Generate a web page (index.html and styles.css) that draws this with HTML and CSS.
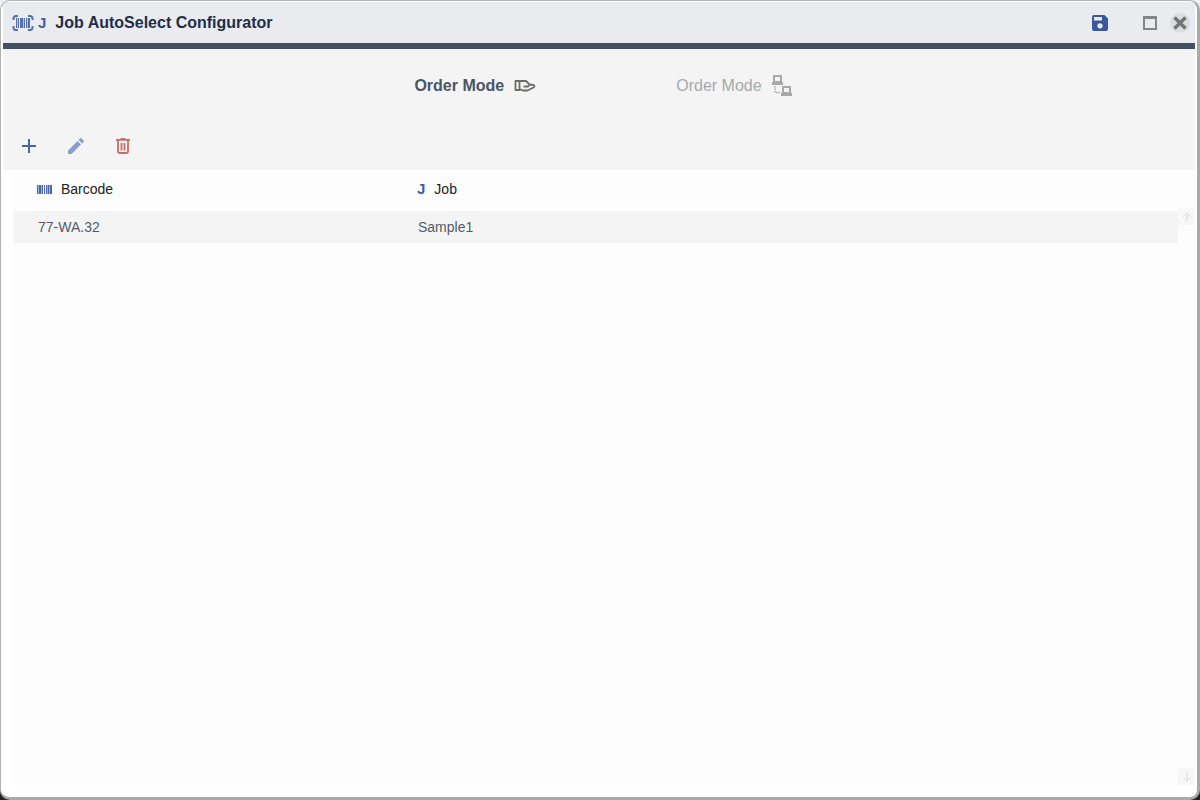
FILE: index.html
```html
<!DOCTYPE html>
<html lang="en">
<head>
    <meta charset="UTF-8">
    <meta name="viewport" content="width=device-width, initial-scale=1.0">
    <title>Job AutoSelect Configurator</title>
    <link rel="stylesheet" href="styles.css">
</head>
<body>
    <div class="window">
        <header class="titlebar">
            <svg width="22" height="18" viewBox="0 0 22 18" aria-hidden="true">
                <path d="M6 2H4a2.5 2.5 0 0 0-2.500 2.500V6M16 2h2a2.500 2.500 0 0 1 2.500 2.500V6M6 16H4a2.500 2.500 0 0 1-2.500-2.500V12M16 16h2a2.500 2.500 0 0 0 2.500-2.500V12" fill="none" stroke="#5271b2" stroke-width="2"/>
                <path d="M4 4h1v10H4zM6 4h1v10H6zM8 4h3v10H8zM12 4h1v10h-1zM14 4h1v10h-1zM16 4h2v10h-2z" fill="#5871ac"/>
                <path d="M5 4h1v10H5zM11 4h1v10h-1zM15 4h1v10h-1z" fill="#b4c0da"/>
            </svg>
            <span class="letter">J</span>
            <h1>Job AutoSelect Configurator</h1>
            <div class="window-buttons">
                <button class="save" type="button" aria-label="Save">
                    <svg width="16" height="16" viewBox="0 0 16 16"><path fill-rule="evenodd" d="M2 0h10.5L16 3.5V14a2 2 0 0 1-2 2H2a2 2 0 0 1-2-2V2a2 2 0 0 1 2-2zM2 2v3.5h8V2zM8 8.2a2.6 2.6 0 1 0 0 5.2 2.6 2.6 0 0 0 0-5.2z" fill="#3a569d"/></svg>
                </button>
                <button type="button" aria-label="Maximize">
                    <svg width="14" height="14" viewBox="0 0 14 14"><path fill-rule="evenodd" d="M0 0h14v14H0zM2 3v9h10V3z" fill="#858585"/></svg>
                </button>
                <button class="close" type="button" aria-label="Close">
                    <svg width="14" height="14" viewBox="0 0 14 14"><path d="M1.5 1.5l11 11M12.5 1.5l-11 11" stroke="#747474" stroke-width="3.5"/></svg>
                </button>
            </div>
        </header>

        <div class="controls">
            <div class="modes">
                <button class="mode active" type="button" aria-pressed="true">
                    Order Mode
                    <svg width="22" height="20" viewBox="0 0 22 20" aria-hidden="true">
                        <path d="M1.5 5h4v9h-4zM5.500 5H12l3.500 3.500 4 .5q1.500.8.500 2.200L13.500 14.500H9L5.500 13M15.500 8.500L14 10.500H9.500" fill="none" stroke="#6c6c69" stroke-width="1.8" stroke-linejoin="round"/>
                    </svg>
                </button>
                <button class="mode" type="button" aria-pressed="false">
                    Order Mode
                    <svg width="20" height="22" viewBox="0 0 20 22" aria-hidden="true">
                        <path d="M2 1h7v6H2zM11 12h7v6h-7z" fill="none" stroke="#a8a8a8" stroke-width="2" stroke-linejoin="round"/>
                        <path d="M0 7h11v3H0zM9 18h11v3H9z" fill="#a8a8a8"/>
                        <path d="M3 11v6.500h6" fill="none" stroke="#a8a8a8" stroke-width="1.5" stroke-dasharray="1.5 1"/>
                    </svg>
                </button>
            </div>
            <div class="toolbar">
                <button type="button" aria-label="Add">
                    <svg width="16" height="16" viewBox="0 0 16 16"><path d="M8 1v14M1 8h14" stroke="#4665a8" stroke-width="2"/></svg>
                </button>
                <button type="button" aria-label="Edit">
                    <svg width="16" height="16" viewBox="0 0 16 16"><path d="M0 12.5L9.5 3 13 6.5 3.5 16H0zM10.5 2L12 .5q.8-.8 1.6 0L15.5 2.4q.8.8 0 1.6L14 5.5z" fill="#8c9fca"/></svg>
                </button>
                <button type="button" aria-label="Delete">
                    <svg width="14" height="16" viewBox="0 0 14 16"><path d="M0 1.800h14M4.500 1h5M2 2v11.200q0 1.800 1.800 1.800h6.400q1.800 0 1.800-1.800V2M5.500 5v7.500M8.500 5v7.500" fill="none" stroke="#c76c6c" stroke-width="1.8"/></svg>
                </button>
            </div>
        </div>

        <main class="list">
            <table>
                <thead>
                    <tr>
                        <th class="barcode" scope="col">
                            <div class="heading">
                                <svg width="15" height="9" viewBox="0 0 15 9" aria-hidden="true"><path d="M0 0h1v9H0zM2 0h2v9H2zM5 0h1v9H5zM7 0h1v9H7zM9 0h1v9H9zM11 0h1v9h-1zM13 0h2v9h-2z" fill="#4c68aa"/><path d="M1 0h1v9H1zM4 0h1v9H4zM10 0h1v9h-1zM12 0h1v9h-1z" fill="#a3b3d6"/></svg>
                                Barcode
                            </div>
                        </th>
                        <th scope="col">
                            <div class="heading">
                                <span class="letter">J</span>
                                Job
                            </div>
                        </th>
                    </tr>
                </thead>
                <tbody>
                    <tr>
                        <td>77-WA.32</td>
                        <td>Sample1</td>
                    </tr>
                </tbody>
            </table>
            <div class="scrollbar">
                <button type="button" aria-label="Scroll up">
                    <svg width="10" height="10" viewBox="0 0 10 10"><path d="M5 9.5v-8M1 5l4-4 4 4" fill="none" stroke="#dcdcdc"/></svg>
                </button>
                <button type="button" aria-label="Scroll down">
                    <svg width="10" height="10" viewBox="0 0 10 10"><path d="M5 .5v8M1 5l4 4 4-4" fill="none" stroke="#dcdcdc"/></svg>
                </button>
            </div>
        </main>
    </div>
</body>
</html>
```
FILE: styles.css
```css
* {
    box-sizing: border-box;
}
body {
    font-family: "Liberation Sans", Arial, sans-serif;
    margin: 0;
    background: linear-gradient(#f0f0f0 50%, #222 50%);
}
button {
    display: flex;
    align-items: center;
    justify-content: center;
    padding: 0;
    border: none;
    background: none;
    font-family: inherit;
    cursor: pointer;
}
svg {
    display: block;
    flex: none;
}
.window {
    display: flex;
    flex-direction: column;
    min-height: 100vh;
    overflow: hidden;
    padding: 1px 2px 0 2px;
    background-color: #fff;
    border: 1px solid #b2b2b2;
    border-right: 3px solid #a9a9a9;
    border-bottom: 3px solid #a9a9a9;
    border-radius: 10px;
}
.titlebar {
    display: flex;
    align-items: center;
    height: 47px;
    padding: 0 5px 0 9px;
    background-color: #eaebef;
    border-bottom: 6px solid #45505f;
}
.letter {
    font-size: 15px;
    font-weight: bold;
    line-height: 20px;
    color: #3f5fa8;
}
.titlebar .letter {
    margin: 0 9px 0 4px;
}
h1 {
    margin: 0;
    font-size: 16px;
    line-height: 20px;
    color: #222d49;
}
.window-buttons {
    display: flex;
    align-items: center;
    gap: 13px;
    margin-left: auto;
}
.save {
    margin-right: 22px;
}
.close {
    width: 20px;
    height: 20px;
    border-radius: 50%;
    background-color: #dcdddf;
}
.controls {
    background-color: #f4f4f4;
}
.modes {
    display: flex;
    justify-content: center;
    gap: 140px;
    padding: 25px 0 23px 8px;
}
.mode {
    gap: 10px;
    height: 24px;
    font-size: 16px;
    color: #a6a9ae;
}
.mode.active {
    font-weight: bold;
    color: #4a5564;
}
.toolbar {
    display: flex;
    align-items: center;
    gap: 23px;
    height: 49px;
    padding-left: 14px;
}
.toolbar button {
    width: 24px;
    height: 24px;
}
.list {
    display: flex;
    flex: 1;
    align-items: flex-start;
    margin: 0 0 12px 10px;
    background-color: #fdfdfd;
}
table {
    flex: 1;
    table-layout: fixed;
    border-collapse: collapse;
    font-size: 14px;
    line-height: 20px;
    text-align: left;
}
th {
    height: 41px;
    padding: 0 0 3px 24px;
    font-weight: normal;
    color: #222;
}
.barcode {
    width: 380px;
}
.heading {
    display: flex;
    align-items: center;
    gap: 9px;
}
td {
    height: 32px;
    padding: 0 0 0 25px;
    background-color: #f4f4f4;
    color: #535b68;
}
.scrollbar {
    display: flex;
    flex-direction: column;
    justify-content: space-between;
    align-self: stretch;
    padding-top: 38px;
}
.scrollbar button {
    width: 17px;
    height: 17px;
    background-color: #f7f7f7;
}
```
